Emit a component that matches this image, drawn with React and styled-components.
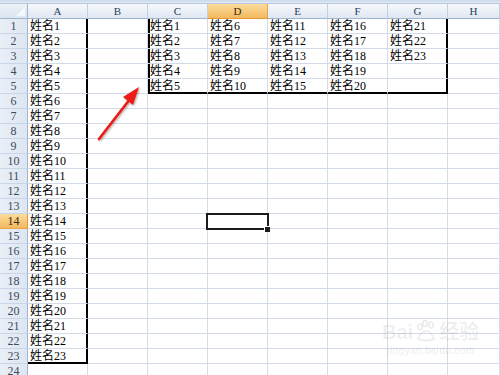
import React from 'react'
import styled, { createGlobalStyle, css } from 'styled-components'

const GlobalStyle = createGlobalStyle`
  html, body {
    margin: 0;
    padding: 0;
    background: #fff;
  }
  body {
    font-family: "Liberation Serif", "Noto Sans CJK SC", serif;
  }
`

const GRID = '#d4dbe8'
const HEAD_LINE = '#9eb6ce'

const Sheet = styled.div`
  position: relative;
  width: 500px;
  height: 375px;
  overflow: hidden;
  background: #fff;
`

const Grid = styled.div`
  display: grid;
  grid-template-columns: 28px repeat(7, 60px) 1fr;
  grid-template-rows: 4px 15px repeat(24, 15px);
`

const TopBand = styled.div`
  grid-column: 1 / -1;
  background: linear-gradient(#c9d7ea, #e3ebf5);
  border-bottom: 1px solid #b7c8de;
  box-sizing: border-box;
`

const Corner = styled.div`
  position: relative;
  box-sizing: border-box;
  background: linear-gradient(#eef2f8, #dbe4f0);
  border-right: 1px solid ${HEAD_LINE};
  border-bottom: 1px solid ${HEAD_LINE};
  &::after {
    content: '';
    position: absolute;
    right: 2px;
    bottom: 2px;
    width: 0;
    height: 0;
    border-left: 9px solid transparent;
    border-bottom: 9px solid #f6f8fb;
  }
`

const ColHead = styled.div`
  box-sizing: border-box;
  display: flex;
  align-items: center;
  justify-content: center;
  font-size: 11px;
  line-height: 14px;
  color: #27415f;
  background: linear-gradient(#f7f9fc, #dfe7f2);
  border-right: 1px solid #c2cfe2;
  border-bottom: 1px solid ${HEAD_LINE};
  ${p => p.$active && css`
    background: linear-gradient(#fbdc9c, #f2b95f);
    border-right-color: #e8a44a;
    border-bottom-color: #e69a35;
    color: #3b2a10;
  `}
`

const RowHead = styled.div`
  box-sizing: border-box;
  display: flex;
  align-items: center;
  justify-content: center;
  font-size: 12px;
  line-height: 14px;
  color: #3f4a59;
  background: linear-gradient(90deg, #e9eff7, #dde6f2);
  border-right: 1px solid ${HEAD_LINE};
  border-bottom: 1px solid #c9d6e8;
  ${p => p.$active && css`
    background: linear-gradient(#fbdc9c, #f2b95f);
    border-right-color: #e69a35;
    border-bottom-color: #e8a44a;
    color: #3b2a10;
  `}
`

const Cell = styled.div`
  position: relative;
  box-sizing: border-box;
  padding-left: 2px;
  font-size: 12px;
  line-height: 14px;
  color: #000;
  white-space: nowrap;
  overflow: visible;
  border-right: 1px solid ${p => (p.$r ? '#000' : GRID)};
  border-bottom: 1px solid ${p => (p.$b ? '#000' : GRID)};
  box-shadow: ${p => {
    const s = []
    if (p.$r) s.push('inset -1px 0 0 #000')
    if (p.$b) s.push('inset 0 -1px 0 #000')
    if (p.$l) s.push('inset 2px 0 0 #000')
    return s.length ? s.join(', ') : 'none'
  }};
  ${p => p.$selected && css`
    z-index: 2;
    &::before {
      content: '';
      position: absolute;
      left: -2px;
      top: -1px;
      right: -2px;
      bottom: -2px;
      border: 2px solid #1c1c1c;
    }
    &::after {
      content: '';
      position: absolute;
      right: -3px;
      bottom: -4px;
      width: 5px;
      height: 5px;
      background: #1c1c1c;
      border: 1px solid #fff;
      border-right: none;
      border-bottom: none;
    }
  `}
`

const Arrow = styled.svg`
  position: absolute;
  left: 90px;
  top: 80px;
  width: 60px;
  height: 70px;
  overflow: visible;
`

const Watermark = styled.div`
  position: absolute;
  left: 382px;
  top: 320px;
  display: flex;
  flex-direction: column;
  align-items: center;
  color: rgba(0, 0, 0, 0.07);
  pointer-events: none;
`

const MarkTop = styled.div`
  display: flex;
  align-items: flex-end;
  gap: 2px;
  font-family: "Liberation Sans", "Noto Sans CJK SC", sans-serif;
  font-size: 20px;
  font-weight: 700;
  line-height: 20px;
`

const MarkSmall = styled.div`
  font-family: "Liberation Sans", sans-serif;
  font-size: 10px;
  font-weight: 700;
  line-height: 12px;
  margin-top: 3px;
`

const COLS = ['A', 'B', 'C', 'D', 'E', 'F', 'G', 'H']
const ROWS = Array.from({ length: 24 }, (_, i) => i + 1)

const valueAt = (col, row) => {
  if (col === 'A' && row <= 23) return '姓名' + row
  const start = { C: 0, D: 5, E: 10, F: 15, G: 20 }[col]
  if (start === undefined || row > 5) return ''
  const n = start + row
  return n <= 23 ? '姓名' + n : ''
}

export default function App() {
  return (
    <Sheet>
      <GlobalStyle />
      <Grid>
        <TopBand />
        <Corner />
        {COLS.map(c => (
          <ColHead key={c} $active={c === 'D'}>{c}</ColHead>
        ))}
        {ROWS.map(r => (
          <React.Fragment key={r}>
            <RowHead $active={r === 14}>{r}</RowHead>
            {COLS.map(c => {
              const inA = c === 'A' && r <= 23
              const inBox = 'CDEFG'.includes(c) && r <= 5
              return (
                <Cell
                  key={c}
                  $r={(inA) || (c === 'G' && r <= 5)}
                  $b={(c === 'A' && r === 23) || (inBox && r === 5)}
                  $l={c === 'C' && r <= 5}
                  $selected={c === 'D' && r === 14}
                >
                  {valueAt(c, r)}
                </Cell>
              )
            })}
          </React.Fragment>
        ))}
      </Grid>

      <Arrow viewBox="0 0 60 70">
        <defs>
          <filter id="sh" x="-30%" y="-30%" width="160%" height="160%">
            <feDropShadow dx="1" dy="1" stdDeviation="0.8" floodColor="#000" floodOpacity="0.35" />
          </filter>
        </defs>
        <g filter="url(#sh)">
          <line x1="9" y1="59" x2="40" y2="19" stroke="#ec1a14" strokeWidth="2.6" strokeLinecap="round" />
          <polygon points="49,7 33,17 43,25" fill="#ec1a14" />
        </g>
      </Arrow>

      <Watermark>
        <MarkTop>
          <span>Bai</span>
          <svg width="22" height="22" viewBox="0 0 22 22">
            <g fill="none" stroke="rgba(0,0,0,0.08)" strokeWidth="1.6">
              <ellipse cx="5" cy="7" rx="2.2" ry="3" />
              <ellipse cx="10" cy="3.5" rx="2.2" ry="3" />
              <ellipse cx="16" cy="5" rx="2.2" ry="3" />
              <path d="M3 19 Q6 11 11 11 Q16 11 19 19 Q11 22 3 19Z" />
            </g>
          </svg>
          <span>经验</span>
        </MarkTop>
        <MarkSmall>jingyan.baidu.com</MarkSmall>
      </Watermark>
    </Sheet>
  )
}
